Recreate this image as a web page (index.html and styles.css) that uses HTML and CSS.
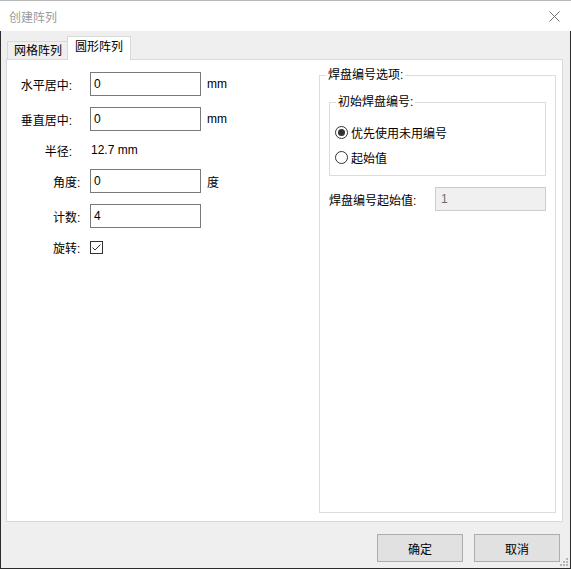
FILE: index.html
```html
<!DOCTYPE html>
<html lang="zh-CN">
<head>
    <meta charset="UTF-8">
    <title>创建阵列</title>
    <link rel="stylesheet" href="styles.css">
</head>
<body>
    <div class="window">
        <div class="titlebar">
            <span class="title">创建阵列</span>
            <svg class="close" width="11" height="11" viewBox="0 0 11 11">
                <path d="M0.5 0.5 L10.5 10.5 M10.5 0.5 L0.5 10.5" stroke="#6e6e6e" stroke-width="1" fill="none"/>
            </svg>
        </div>
        <div class="client">
            <div class="tabs">
                <div class="tab">网格阵列</div>
                <div class="tab active">圆形阵列</div>
            </div>
            <div class="panel">
                <div class="form">
                    <div class="row">
                        <span class="lbl">水平居中:</span>
                        <input class="field" type="text" value="0">
                        <span class="unit">mm</span>
                    </div>
                    <div class="row">
                        <span class="lbl">垂直居中:</span>
                        <input class="field" type="text" value="0">
                        <span class="unit">mm</span>
                    </div>
                    <div class="row tight">
                        <span class="lbl">半径:</span>
                        <span class="value">12.7 mm</span>
                    </div>
                    <div class="row tight">
                        <span class="lbl short">角度:</span>
                        <input class="field" type="text" value="0">
                        <span class="unit">度</span>
                    </div>
                    <div class="row">
                        <span class="lbl short">计数:</span>
                        <input class="field" type="text" value="4">
                    </div>
                    <div class="row tight">
                        <span class="lbl short">旋转:</span>
                        <span class="check">
                            <svg width="11" height="11" viewBox="0 0 11 11">
                                <path d="M1.5 5.5 L4 8 L9.5 2.5" stroke="#333" stroke-width="1" fill="none"/>
                            </svg>
                        </span>
                    </div>
                </div>
                <fieldset class="group">
                    <legend>焊盘编号选项:</legend>
                    <fieldset class="group inner">
                        <legend>初始焊盘编号:</legend>
                        <div class="radio-row">
                            <span class="radio on"></span>
                            <span>优先使用未用编号</span>
                        </div>
                        <div class="radio-row">
                            <span class="radio"></span>
                            <span>起始值</span>
                        </div>
                    </fieldset>
                    <div class="start-row">
                        <span>焊盘编号起始值:</span>
                        <input class="field disabled" type="text" value="1" disabled>
                    </div>
                </fieldset>
            </div>
            <div class="buttons">
                <div class="btn">确定</div>
                <div class="btn">取消</div>
            </div>
            <div class="grip">
                <svg width="8" height="8" viewBox="0 0 8 8" fill="#b5b5b5">
                    <rect x="6" y="0" width="2" height="2"/>
                    <rect x="3" y="3" width="2" height="2"/>
                    <rect x="6" y="3" width="2" height="2"/>
                    <rect x="0" y="6" width="2" height="2"/>
                    <rect x="3" y="6" width="2" height="2"/>
                    <rect x="6" y="6" width="2" height="2"/>
                </svg>
            </div>
        </div>
    </div>
</body>
</html>
```

FILE: styles.css
```css
body {
    margin: 0;
    padding: 0;
    background-color: #ffffff;
    font-family: "Liberation Sans", "Noto Sans CJK SC", sans-serif;
    font-size: 12px;
    color: #000000;
}
.window {
    width: 571px;
    height: 569px;
    display: flex;
    flex-direction: column;
}
.titlebar {
    height: 31px;
    box-sizing: border-box;
    border-top: 1px solid #b9b9b9;
    background-color: #ffffff;
    display: flex;
    align-items: center;
    padding-left: 9px;
    padding-right: 11px;
}
.title {
    color: #9b9b9b;
    flex: 1;
    font-size: 12px;
}
.client {
    position: relative;
    flex: 1;
    background-color: #efefef;
    border-left: 1px solid #2b2b2b;
    border-right: 1px solid #2b2b2b;
    border-bottom: 1px solid #2b2b2b;
    padding: 5px 7px 0 5px;
}
.tabs {
    display: flex;
    align-items: flex-end;
    height: 23px;
    margin-left: 1px;
}
.tab {
    height: 18px;
    box-sizing: border-box;
    border: 1px solid #d9d9d9;
    border-bottom: none;
    border-right: none;
    padding: 1px 5px 0 6px;
    line-height: 16px;
    background-color: #efefef;
}
.tab.active {
    height: 24px;
    margin-bottom: -1px;
    border-right: 1px solid #d9d9d9;
    background-color: #ffffff;
    padding: 2px 7px 0 7px;
    position: relative;
    z-index: 1;
}
.panel {
    height: 463px;
    box-sizing: border-box;
    border: 1px solid #d9d9d9;
    background-color: #ffffff;
    display: flex;
}
.form {
    flex: 1;
    padding: 12px 0 0 13px;
}
.row {
    display: flex;
    align-items: center;
    height: 24px;
}
.row + .row {
    margin-top: 11px;
}
.row.tight {
    margin-top: 7px;
}
.lbl {
    width: 70px;
    text-align: right;
    padding-right: 18px;
    box-sizing: border-box;
}
.lbl.short {
    text-align: left;
    padding-left: 33px;
    padding-right: 0;
}
.field {
    width: 111px;
    height: 24px;
    box-sizing: border-box;
    border: 1px solid #7a7a7a;
    border-radius: 0;
    padding: 0 3px;
    margin: 0;
    font-family: inherit;
    font-size: 12px;
    color: #000000;
    background-color: #ffffff;
    outline: none;
}
.field.disabled {
    background-color: #f0f0f0;
    border-color: #cccccc;
    color: #6d6d6d;
    padding-left: 5px;
}
.unit {
    margin-left: 6px;
}
.value {
    margin-left: 1px;
}
.check {
    width: 13px;
    height: 13px;
    box-sizing: border-box;
    border: 1px solid #333333;
    display: flex;
    align-items: center;
    justify-content: center;
}
.group {
    margin: 7px 6px 8px 0;
    width: 237px;
    box-sizing: border-box;
    border: 1px solid #dcdcdc;
    padding: 0 9px;
    min-width: 0;
}
.group legend {
    padding: 0 2px;
    margin-left: -3px;
    line-height: 16px;
}
.group.inner {
    width: 217px;
    margin: 11px 0 0 0;
    padding: 12px 9px 8px 5px;
}
.group.inner legend {
    margin-left: 1px;
}
.radio-row {
    display: flex;
    align-items: center;
    height: 20px;
    gap: 3px;
}
.radio-row + .radio-row {
    margin-top: 5px;
}
.radio {
    width: 13px;
    height: 13px;
    box-sizing: border-box;
    border: 1px solid #333333;
    border-radius: 50%;
    display: flex;
    align-items: center;
    justify-content: center;
}
.radio.on::after {
    content: "";
    width: 7px;
    height: 7px;
    border-radius: 50%;
    background-color: #333333;
}
.start-row {
    display: flex;
    align-items: center;
    justify-content: space-between;
    height: 24px;
    margin-top: 11px;
}
.buttons {
    display: flex;
    justify-content: flex-end;
    gap: 11px;
    margin-top: 12px;
    margin-right: 3px;
}
.btn {
    width: 86px;
    height: 28px;
    box-sizing: border-box;
    border: 1px solid #adadad;
    background-color: #e1e1e1;
    display: flex;
    align-items: center;
    justify-content: center;
}
.grip {
    position: absolute;
    right: 2px;
    bottom: 2px;
    width: 8px;
    height: 8px;
    line-height: 0;
}
```
